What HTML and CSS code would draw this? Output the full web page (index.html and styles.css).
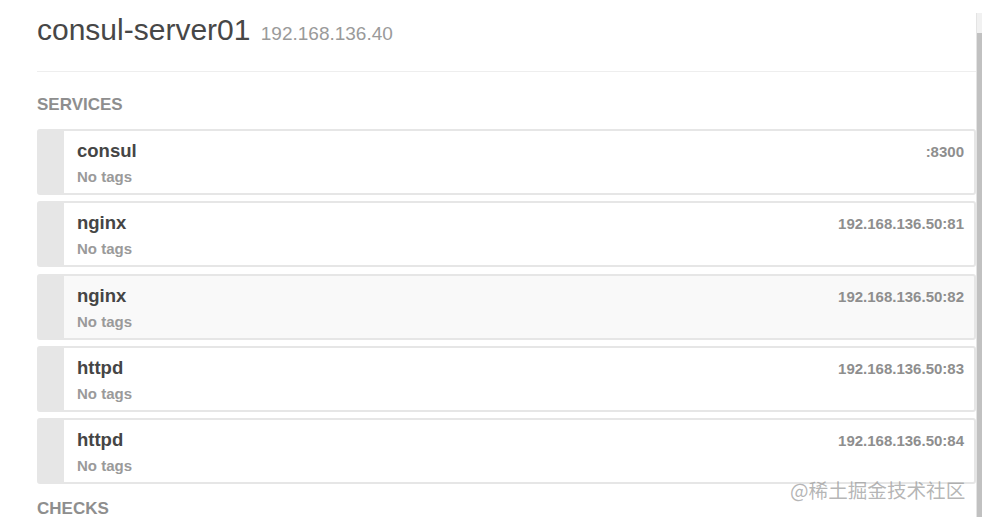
FILE: index.html
```html
<!DOCTYPE html>
<html>
<head>
<meta charset="utf-8">
<link rel="stylesheet" href="styles.css">
</head>
<body>
<div class="page">
  <div class="header">
    <h1 class="title">consul-server01 <span class="addr">192.168.136.40</span></h1>
  </div>
  <h2 class="section">SERVICES</h2>
  <div class="list">
    <div class="card">
      <div class="strip"></div>
      <div class="body">
        <div class="main"><div class="name">consul</div><div class="tags">No tags</div></div>
        <div class="port">:8300</div>
      </div>
    </div>
    <div class="card">
      <div class="strip"></div>
      <div class="body">
        <div class="main"><div class="name">nginx</div><div class="tags">No tags</div></div>
        <div class="port">192.168.136.50:81</div>
      </div>
    </div>
    <div class="card card-hover">
      <div class="strip"></div>
      <div class="body">
        <div class="main"><div class="name">nginx</div><div class="tags">No tags</div></div>
        <div class="port">192.168.136.50:82</div>
      </div>
    </div>
    <div class="card">
      <div class="strip"></div>
      <div class="body">
        <div class="main"><div class="name">httpd</div><div class="tags">No tags</div></div>
        <div class="port">192.168.136.50:83</div>
      </div>
    </div>
    <div class="card">
      <div class="strip"></div>
      <div class="body">
        <div class="main"><div class="name">httpd</div><div class="tags">No tags</div></div>
        <div class="port">192.168.136.50:84</div>
      </div>
    </div>
  </div>
  <h2 class="section section-checks">CHECKS</h2>
</div>
<div class="scrollbar"><div class="thumb"></div></div>
<div class="watermark">@稀土掘金技术社区</div>
</body>
</html>
```
FILE: styles.css
```css
html, body {
  margin: 0;
  padding: 0;
  background: #fff;
  overflow: hidden;
  height: 517px;
}
body {
  font-family: "Liberation Sans", Arial, sans-serif;
  position: relative;
}
.page {
  padding: 10px 6px 0 37px;
}
.header {
  padding-bottom: 21px;
  border-bottom: 1px solid #eeeeee;
}
.title {
  margin: 0;
  font-size: 30px;
  line-height: 40px;
  height: 40px;
  font-weight: normal;
  color: #474747;
}
.addr {
  font-size: 19px;
  line-height: 1;
  color: #9a9a9a;
  margin-left: 2px;
}
.section {
  margin: 23px 0 14px;
  font-size: 17px;
  line-height: 20px;
  font-weight: bold;
  color: #8e8e8e;
}
.section-checks {
  margin-top: 15px;
}
.list {
  display: flex;
  flex-direction: column;
  gap: 6.25px;
}
.card {
  display: flex;
  height: 66px;
  box-sizing: border-box;
  border: 2px solid #e6e6e6;
  border-radius: 3px;
  background: #fff;
}
.card-hover {
  background: #f9f9f9;
}
.strip {
  width: 25px;
  background: #e6e6e6;
  flex: none;
}
.body {
  flex: 1;
  display: flex;
  justify-content: space-between;
  padding: 9px 10px 0 13px;
}
.name {
  font-size: 18.5px;
  line-height: 22px;
  font-weight: bold;
  color: #454545;
}
.tags {
  margin-top: 5px;
  font-size: 15px;
  line-height: 20px;
  font-weight: bold;
  color: #9a9a9a;
}
.port {
  font-size: 15px;
  line-height: 24px;
  font-weight: bold;
  color: #8e8e8e;
}
.scrollbar {
  position: absolute;
  top: 13px;
  right: 0;
  width: 6px;
  height: 504px;
  background: #f1f1f1;
  border-left: 1px solid #e4e4e4;
  box-sizing: border-box;
}
.thumb {
  margin-top: 20px;
  height: 484px;
  background: #c1c1c1;
}
.watermark {
  position: absolute;
  left: 790px;
  top: 478px;
  font-family: "Noto Sans CJK SC", sans-serif;
  font-size: 19.6px;
  line-height: 24px;
  color: rgba(150, 150, 150, 0.7);
}
```
